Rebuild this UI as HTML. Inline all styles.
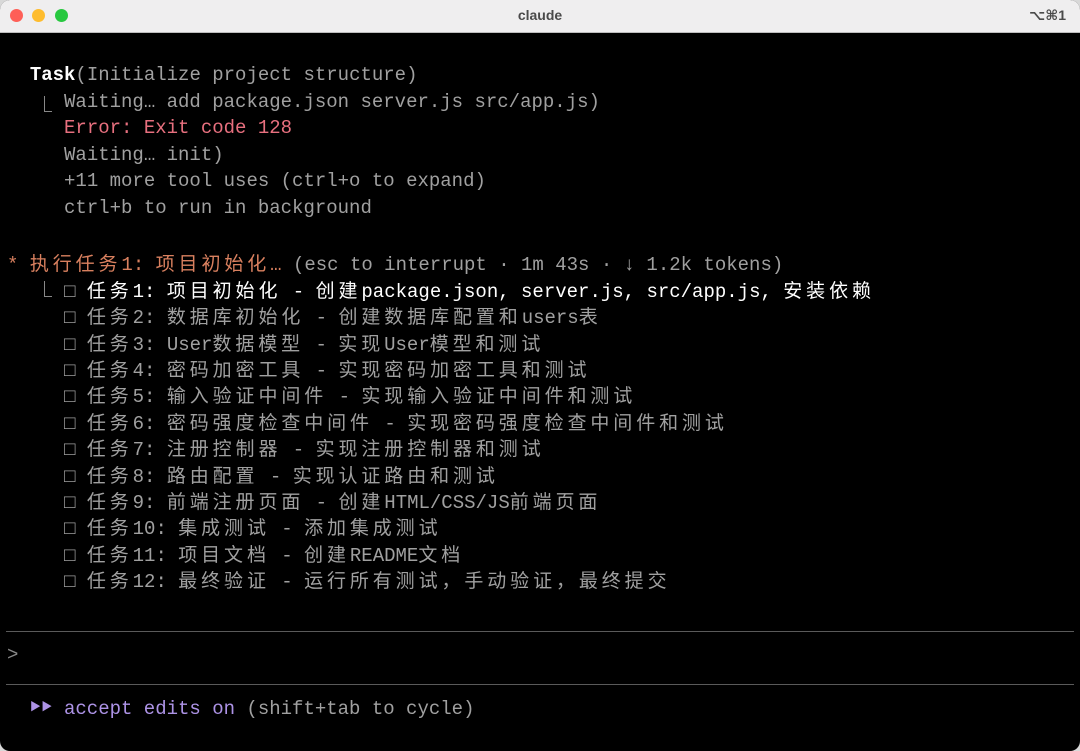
<!DOCTYPE html>
<html><head><meta charset="utf-8"><style>
html,body{margin:0;padding:0;background:#d8d8d8;width:1080px;height:751px;overflow:hidden}
.win{position:absolute;left:0;top:0;width:1080px;height:751px;background:#000;border-radius:10px;overflow:hidden}
.tb{position:absolute;left:0;top:0;width:1080px;height:32px;background:#efeeef;border-bottom:1px solid #bdbdbd}
.dot{position:absolute;top:9px;width:13px;height:13px;border-radius:50%}
.tt{position:absolute;top:7px;width:100%;text-align:center;font:600 14px "Liberation Sans",sans-serif;color:#4a4a4a}
.kb{position:absolute;right:14px;top:7px;font:600 14px "Liberation Sans","DejaVu Sans",sans-serif;color:#4a4a4a}
.l{position:absolute;left:7px;margin-top:3px;height:26px;line-height:26px;white-space:pre;font:19px "Liberation Mono","Noto Sans CJK SC",monospace;color:#a0a0a0}
.c{letter-spacing:3.9px}
.w{color:#fff}
.b{font-weight:bold}
.r{color:#e8707f}
.o{color:#d9805f}
.p{color:#ad93e6}
.hr{position:absolute;left:6px;width:1068px;height:1px;background:#5a5a5a}
.k{display:inline-block;width:11.4px;height:26px;position:relative;vertical-align:top}
.k:after{content:"";position:absolute;left:3px;top:5px;width:7px;height:15px;border-left:1.5px solid #888;border-bottom:1.5px solid #888}
.tri{display:inline-block;width:11.4px;font-size:11px;vertical-align:top}
</style></head><body><div class="win">
<div class="tb">
<div class="dot" style="left:10px;background:#fe5f57"></div>
<div class="dot" style="left:32px;background:#febc2e"></div>
<div class="dot" style="left:55px;background:#28c840"></div>
<div class="tt">claude</div><div class="kb">⌥⌘1</div>
</div>
<div class="l" style="top:61px">  <span class="w b">Task</span>(Initialize project structure)</div>
<div class="l" style="top:88px">   <span class="k"></span> Waiting… add package.json server.js src/app.js)</div>
<div class="l r" style="top:114px">     Error: Exit code 128</div>
<div class="l" style="top:141px">     Waiting… init)</div>
<div class="l" style="top:167px">     +11 more tool uses (ctrl+o to expand)</div>
<div class="l" style="top:194px">     ctrl+b to run in background</div>
<div class="l" style="top:246px"><span class="o">* <span class="c">执行任务</span>1: <span class="c">项目初始化</span>…</span> (esc to interrupt · 1m 43s · ↓ 1.2k tokens)</div>
<div class="l" style="top:273px">   <span class="k"></span> □ <span class="w"><span class="c">任务</span>1: <span class="c">项目初始化</span> - <span class="c">创建</span>package.json, server.js, src/app.js, <span class="c">安装依赖</span></span></div>
<div class="l" style="top:299px">     □ <span class="c">任务</span>2: <span class="c">数据库初始化</span> - <span class="c">创建数据库配置和</span>users<span class="c">表</span></div>
<div class="l" style="top:326px">     □ <span class="c">任务</span>3: User<span class="c">数据模型</span> - <span class="c">实现</span>User<span class="c">模型和测试</span></div>
<div class="l" style="top:352px">     □ <span class="c">任务</span>4: <span class="c">密码加密工具</span> - <span class="c">实现密码加密工具和测试</span></div>
<div class="l" style="top:378px">     □ <span class="c">任务</span>5: <span class="c">输入验证中间件</span> - <span class="c">实现输入验证中间件和测试</span></div>
<div class="l" style="top:405px">     □ <span class="c">任务</span>6: <span class="c">密码强度检查中间件</span> - <span class="c">实现密码强度检查中间件和测试</span></div>
<div class="l" style="top:431px">     □ <span class="c">任务</span>7: <span class="c">注册控制器</span> - <span class="c">实现注册控制器和测试</span></div>
<div class="l" style="top:458px">     □ <span class="c">任务</span>8: <span class="c">路由配置</span> - <span class="c">实现认证路由和测试</span></div>
<div class="l" style="top:484px">     □ <span class="c">任务</span>9: <span class="c">前端注册页面</span> - <span class="c">创建</span>HTML/CSS/JS<span class="c">前端页面</span></div>
<div class="l" style="top:510px">     □ <span class="c">任务</span>10: <span class="c">集成测试</span> - <span class="c">添加集成测试</span></div>
<div class="l" style="top:537px">     □ <span class="c">任务</span>11: <span class="c">项目文档</span> - <span class="c">创建</span>README<span class="c">文档</span></div>
<div class="l" style="top:563px">     □ <span class="c">任务</span>12: <span class="c">最终验证</span> - <span class="c">运行所有测试，手动验证，最终提交</span></div>
<div class="hr" style="top:631px"></div>
<div class="l" style="top:641px;color:#888">&gt;</div>
<div class="hr" style="top:684px"></div>
<div class="l" style="top:695px">  <span class="p"><span class="tri">▶</span><span class="tri">▶</span> accept edits on</span> (shift+tab to cycle)</div>
</div></body></html>
